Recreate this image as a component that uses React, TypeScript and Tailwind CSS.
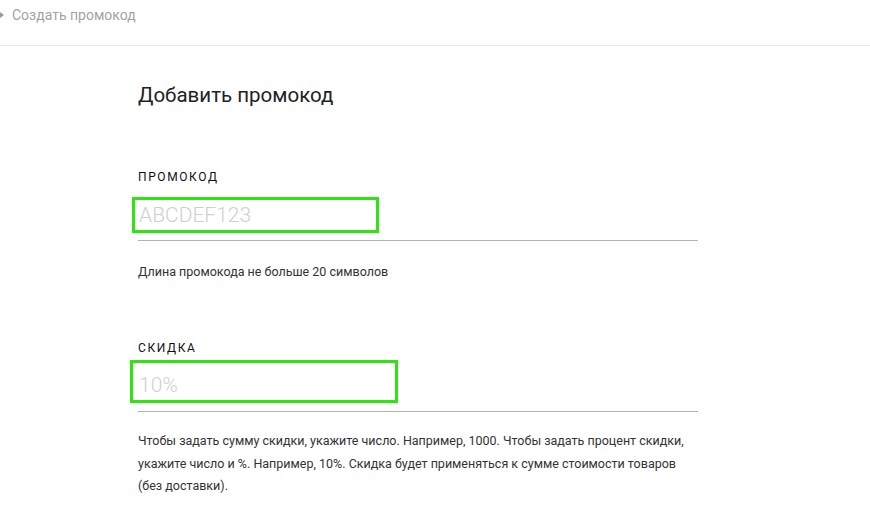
import { FC } from "react";

const font = { fontFamily: "Roboto, 'Noto Sans', sans-serif" };

const Field: FC<{ label: string; placeholder: string; wrap: string; box: string; hint: React.ReactNode }> = ({
    label,
    placeholder,
    wrap,
    box,
    hint,
}) => {
    return <div>
        <div className="text-[12px] leading-[14px] tracking-[1.6px] text-[#111] uppercase">{label}</div>
        <div className={`relative border-b border-[#b4b4b4] ${wrap}`}>
            <input
                className="w-full h-[28px] leading-[28px] bg-transparent outline-none text-[21px] font-light text-[#222] placeholder:text-[#cfcfcf] px-[1px]"
                placeholder={placeholder}
            />
            <div className={`absolute pointer-events-none border-[3px] border-[#2fe411] ${box}`} />
        </div>
        {hint}
    </div>
};

export default function App() {
    return <div className="w-[870px] h-[530px] bg-white overflow-hidden" style={font}>
        <div className="h-[46px] border-b border-[#e9e9e9] flex items-start pt-[6px]">
            <svg className="mt-[6px] mr-[8px] shrink-0" width="4" height="6" viewBox="0 0 4 6">
                <path d="M0 0 L4 3 L0 6 Z" fill="#9a9a9a" />
            </svg>
            <span className="text-[#a3a3a3] text-[14px] leading-[18px]">Создать промокод</span>
        </div>
        <div className="pl-[138px] w-[698px]">
            <h1 className="mt-[34px] text-[20.5px] leading-[30px] text-[#222] font-normal">Добавить промокод</h1>
            <div className="mt-[60px]">
                <Field
                    label="Промокод"
                    placeholder="ABCDEF123"
                    wrap="mt-[16px] h-[41px] pt-[1px]"
                    box="left-[-6px] top-[-3px] w-[247px] h-[36px]"
                    hint={<p className="mt-[23px] text-[12.5px] leading-[16px] text-[#333]">Длина промокода не больше 20 символов</p>}
                />
            </div>
            <div className="mt-[61px]">
                <Field
                    label="Скидка"
                    placeholder="10%"
                    wrap="mt-[8px] h-[49px] pt-[8px]"
                    box="left-[-8px] top-[-3px] w-[268px] h-[43px]"
                    hint={<p className="mt-[18px] text-[12.5px] leading-[22.5px] text-[#333]">
                        Чтобы задать сумму скидки, укажите число. Например, 1000. Чтобы задать процент скидки,<br />
                        укажите число и %. Например, 10%. Скидка будет применяться к сумме стоимости товаров<br />
                        (без доставки).
                    </p>}
                />
            </div>
        </div>
    </div>
}
